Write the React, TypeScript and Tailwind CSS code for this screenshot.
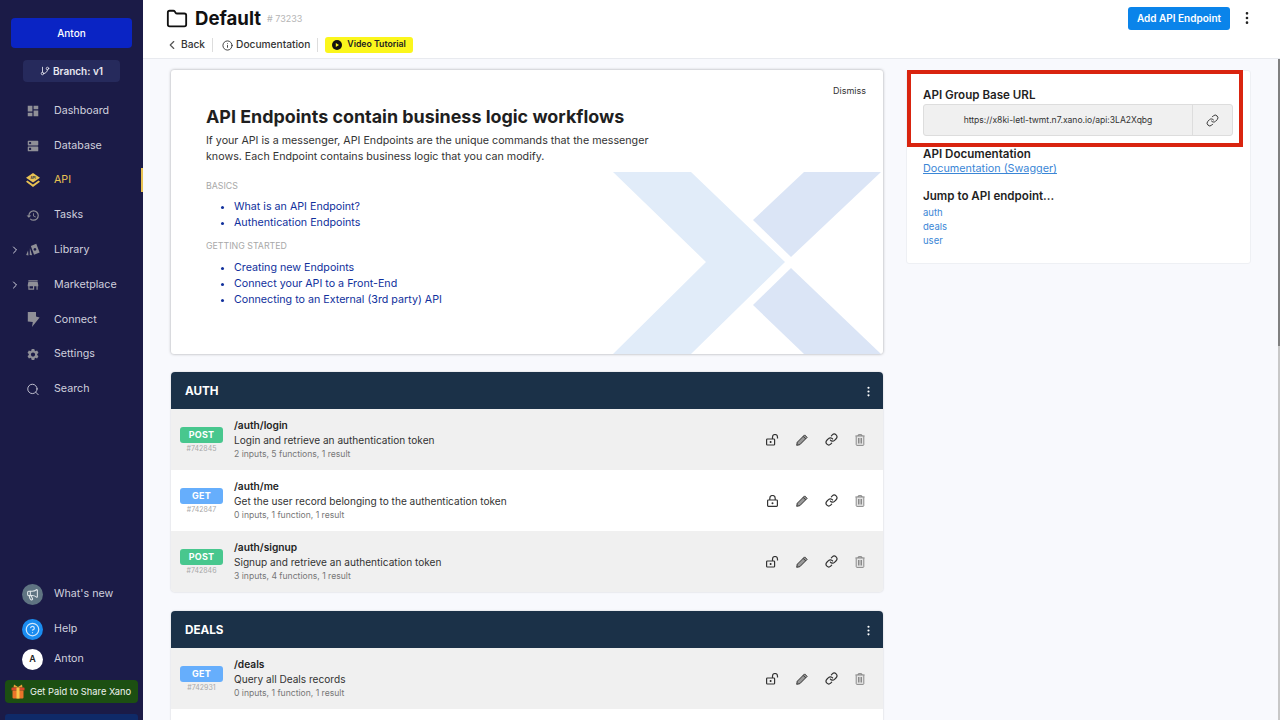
import { ChevronLeft, ChevronRight, Folder, Info, Link, Search, GitBranch, EllipsisVertical, HelpCircle, Megaphone } from "lucide-react";
import { MdDashboard, MdDns, MdHistory, MdStore, MdSettings } from "react-icons/md";

function ApiIcon() {
    return (
        <svg width="14" height="15" viewBox="0 0 14 15" fill="#e8c253">
            <path d="M7 0 14 4.8 7 9.6 0 4.8z" />
            <path d="M1.4 7.6 7 11.6 12.6 7.6 14 8.8 7 14 0 8.8z" />
            <text x="7" y="6" textAnchor="middle" fontSize="3" fontWeight="700" fill="#1b1b47">API</text>
        </svg>
    );
}

function LibraryIcon() {
    return (
        <svg width="15" height="14" viewBox="0 0 15 14" fill="#8f8f97">
            <path fillRule="evenodd" d="M5.2 2.6 11 0.2 14.6 9.8 8.6 12.2zM9.6 4.8a1.5 1.5 0 1 0 .01 0z" />
            <path d="M4.2 5 4 12.4 6.6 12.6z" />
            <path d="M2.2 7.6 0.2 12.4 2.6 12.8z" />
        </svg>
    );
}

function BoltIcon() {
    return (
        <svg width="13" height="15" viewBox="0 0 13 15" fill="#8f8f97">
            <path d="M0.8 0H9V4.6L12.6 5.6 5 15 5.8 10 0.8 9.4z" />
        </svg>
    );
}

function GiftIcon() {
    return (
        <svg width="14" height="15" viewBox="0 0 14 15">
            <path d="M3 0.5 7 3 11 0.5 11.5 3.5H2.5z" fill="#e8a23a" />
            <rect x="0.5" y="3.5" width="13" height="3" rx="0.6" fill="#d9482a" />
            <rect x="1.5" y="6.5" width="11" height="8" rx="1" fill="#e8742a" />
            <rect x="5.5" y="3.5" width="3" height="11" fill="#f4c64a" />
        </svg>
    );
}

function PlayRing() {
    return (
        <svg width="10" height="10" viewBox="0 0 10 10">
            <circle cx="5" cy="5" r="5" fill="#111" />
            <path d="M3.8 3 7 5 3.8 7z" fill="#fbf61c" />
        </svg>
    );
}

function OpenLock() {
    return (
        <svg width="13" height="12" viewBox="0 0 13 12" fill="none" stroke="#333" strokeWidth="1.2">
            <rect x="0.6" y="5" width="8" height="6" rx="0.8" />
            <path d="M6.5 5V3a2.5 2.5 0 0 1 5 0v1.6" />
            <rect x="3.8" y="7" width="1.6" height="2" fill="#333" stroke="none" />
        </svg>
    );
}

function ClosedLock() {
    return (
        <svg width="11" height="12" viewBox="0 0 11 12" fill="none" stroke="#333" strokeWidth="1.2">
            <rect x="0.6" y="5" width="9.8" height="6.4" rx="0.8" />
            <path d="M2.8 5V3.2a2.7 2.7 0 0 1 5.4 0V5" />
            <circle cx="5.5" cy="8.2" r="1" fill="#333" stroke="none" />
        </svg>
    );
}

function PencilIcon() {
    return (
        <svg width="12" height="12" viewBox="0 0 12 12" fill="#999" stroke="#333" strokeWidth="1" strokeLinejoin="round">
            <path d="M8.6 0.9 11.1 3.4 3.8 10.7 0.7 11.3 1.3 8.2z" />
            <path d="M7.2 2.4 9.6 4.8" fill="none" />
        </svg>
    );
}

function TrashIcon() {
    return (
        <svg width="10" height="12" viewBox="0 0 10 12" fill="#e4e4e4" stroke="#8a8a8a" strokeWidth="1">
            <path d="M0.3 2H9.7M3.4 2V0.6H6.6V2" fill="none" />
            <rect x="1.2" y="2" width="7.6" height="9.4" rx="0.8" />
            <path d="M3.5 4V9.5M5 4V9.5M6.5 4V9.5" />
        </svg>
    );
}

const navItems = [
    { label: "Dashboard", icon: <MdDashboard size={18} color="#8f8f97" /> },
    { label: "Database", icon: <MdDns size={16} color="#8f8f97" /> },
    { label: "API", icon: <ApiIcon />, active: true },
    { label: "Tasks", icon: <MdHistory size={17} color="#8f8f97" /> },
    { label: "Library", icon: <LibraryIcon />, arrow: true },
    { label: "Marketplace", icon: <MdStore size={16} color="#8f8f97" />, arrow: true },
    { label: "Connect", icon: <BoltIcon /> },
    { label: "Settings", icon: <MdSettings size={17} color="#8f8f97" /> },
    { label: "Search", icon: <Search size={17} color="#d5d5e0" strokeWidth={1.5} /> },
];

const authRows = [
    { method: "POST", id: "#742845", path: "/auth/login", desc: "Login and retrieve an authentication token", meta: "2 inputs, 5 functions, 1 result" },
    { method: "GET", id: "#742847", path: "/auth/me", desc: "Get the user record belonging to the authentication token", meta: "0 inputs, 1 function, 1 result", locked: true },
    { method: "POST", id: "#742846", path: "/auth/signup", desc: "Signup and retrieve an authentication token", meta: "3 inputs, 4 functions, 1 result" },
];

const dealRows = [
    { method: "GET", id: "#742931", path: "/deals", desc: "Query all Deals records", meta: "0 inputs, 1 function, 1 result" },
];

type RowData = { method: string; id: string; path: string; desc: string; meta: string; locked?: boolean };

function EndpointRow({ row, shaded }: { row: RowData; shaded: boolean }) {
    return (
        <div className={`h-[61px] flex items-center pl-[9px] pr-[18px] ${shaded ? "bg-[#f0f0f0]" : "bg-white"}`}>
            <div className="w-[43px] flex flex-col items-center shrink-0 pt-[1px]">
                <div className={`w-[43px] h-[16px] rounded-[3px] flex items-center justify-center text-white text-[9px] font-bold tracking-wide ${row.method === "POST" ? "bg-[#48c78e]" : "bg-[#66aefc]"}`}>
                    {row.method}
                </div>
                <div className="text-[7px] text-[#a8a8a8] leading-[11px]">{row.id}</div>
            </div>
            <div className="ml-[11px] flex-1">
                <div className="text-[10.2px] font-semibold text-[#1f1f1f] leading-[14px]">{row.path}</div>
                <div className="text-[10.1px] text-[#333] leading-[16px]">{row.desc}</div>
                <div className="text-[8.6px] text-[#777] leading-[13px]">{row.meta}</div>
            </div>
            <div className="flex items-center text-[#333]">
                <div className="w-[13px] flex justify-center">{row.locked ? <ClosedLock /> : <OpenLock />}</div>
                <div className="ml-[17px]"><PencilIcon /></div>
                <Link size={13} strokeWidth={2.2} className="ml-[17px]" />
                <div className="ml-[17px]"><TrashIcon /></div>
            </div>
        </div>
    );
}

function EndpointGroup({ title, rows, blankRow }: { title: string; rows: RowData[]; blankRow?: boolean }) {
    return (
        <div className="rounded-[4px] overflow-hidden shadow-[0_0_2px_rgba(0,0,0,0.2)] mb-[19px]">
            <div className="h-[37px] bg-[#1b3148] flex items-center justify-between pl-[14px] pr-[8px] pt-[2px]">
                <span className="text-white text-[11.7px] font-bold">{title}</span>
                <EllipsisVertical size={13} color="#fff" />
            </div>
            {rows.map((r, i) => (
                <EndpointRow key={r.id} row={r} shaded={i % 2 === 0} />
            ))}
            {blankRow && <div className="h-[61px] bg-white" />}
        </div>
    );
}

export default function App() {
    return (
        <div className="w-[1280px] h-[720px] overflow-hidden flex bg-white font-['Inter',sans-serif]">
            {/* Sidebar */}
            <div className="w-[143px] h-full bg-[#1b1b47] flex flex-col shrink-0 relative">
                <div className="mx-[11px] mt-[18px] h-[30px] rounded-[4px] bg-[#0a24c4] flex items-center justify-center text-[10px] font-medium text-white">Anton</div>
                <div className="mx-[23px] mt-[12px] h-[22px] rounded-[4px] bg-[#262a5c] flex items-center justify-center gap-[3px] text-[10px] font-semibold text-[#e8e8f0]">
                    <GitBranch size={10} /> Branch: v1
                </div>
                <div className="mt-[11.5px]">
                    {navItems.map((item) => (
                        <div key={item.label} className="relative h-[34.8px] flex items-center">
                            {item.arrow && <ChevronRight size={12} color="#d5d5e0" className="absolute left-[9px]" />}
                            <div className="w-[14px] ml-[26px] flex justify-center">{item.icon}</div>
                            <span className={`ml-[14px] text-[10.7px] ${item.active ? "text-[#e8c253]" : "text-[#d0d0de]"}`}>{item.label}</span>
                            {item.active && <div className="absolute right-0 top-[5px] w-[2px] h-[24px] bg-[#e8c253]" />}
                        </div>
                    ))}
                </div>
                <div className="mt-auto">
                    <div className="flex items-center h-[30px] pl-[22px]">
                        <div className="w-[21px] h-[21px] rounded-full bg-[#5f7482] flex items-center justify-center"><Megaphone size={13} color="#dfe5e8" /></div>
                        <span className="ml-[11px] text-[10.7px] text-[#d0d0de]">What's new</span>
                    </div>
                    <div className="flex items-center h-[30px] mt-[5px] pl-[22px]">
                        <div className="w-[21px] h-[21px] rounded-full bg-[#1a8cf0] flex items-center justify-center"><HelpCircle size={15} color="#cfe6fb" /></div>
                        <span className="ml-[11px] text-[10.7px] text-[#d0d0de]">Help</span>
                    </div>
                    <div className="flex items-center h-[30px] pl-[22px]">
                        <div className="w-[21px] h-[21px] rounded-full bg-white flex items-center justify-center text-[9px] font-semibold text-[#222]">A</div>
                        <span className="ml-[11px] text-[10.7px] text-[#d0d0de]">Anton</span>
                    </div>
                    <div className="mx-[5px] mt-[6px] h-[23px] rounded-[4px] bg-[#1c4f12] flex items-center pl-[6px] text-[9.3px] text-[#eef3ee]">
                        <GiftIcon />
                        <span className="ml-[5px] whitespace-nowrap">Get Paid to Share Xano</span>
                    </div>
                    <div className="mx-[5px] mt-[11px] h-[6px] rounded-t-[3px] bg-[#0f2a68]" />
                </div>
            </div>

            {/* Main */}
            <div className="flex-1 flex flex-col min-w-0">
                {/* Header */}
                <div className="h-[59px] border-b border-[#e8eaef] pl-[23px] pr-[25px] flex justify-between shrink-0">
                    <div>
                        <div className="flex items-center mt-[6px] h-[26px]">
                            <Folder size={22} color="#111" strokeWidth={2} />
                            <span className="ml-[7px] text-[18.6px] font-bold text-[#111]">Default</span>
                            <span className="ml-[6px] text-[9px] text-[#b5b5b5]"># 73233</span>
                        </div>
                        <div className="flex items-center mt-[5px] h-[16px] text-[10.2px] font-medium text-[#333]">
                            <ChevronLeft size={14} color="#555" className="-ml-[1px]" />
                            <span className="ml-[2px]">Back</span>
                            <div className="w-px h-[14px] bg-[#ddd] ml-[7px] mr-[9px]" />
                            <Info size={11} color="#333" />
                            <span className="ml-[3px]">Documentation</span>
                            <div className="w-px h-[14px] bg-[#ddd] mx-[7px]" />
                            <div className="h-[16px] w-[88px] pl-[7px] rounded-[3px] bg-[#fbf61c] flex items-center text-[8.7px] font-semibold text-[#222]">
                                <PlayRing />
                                <span className="ml-[5px]">Video Tutorial</span>
                            </div>
                        </div>
                    </div>
                    <div className="flex items-start mt-[7px]">
                        <div className="h-[23px] w-[102px] rounded-[3px] bg-[#0a84ea] flex items-center justify-center text-white text-[10px] font-semibold">Add API Endpoint</div>
                        <EllipsisVertical size={16} color="#222" className="ml-[9px] mt-[3px]" />
                    </div>
                </div>

                {/* Content */}
                <div className="relative flex-1 bg-[#f8f9fd] pl-[28px] pt-[11px] flex gap-[23px] overflow-hidden">
                    <div className="w-[712px] shrink-0">
                        {/* Intro card */}
                        <div className="relative h-[284px] mb-[18px] bg-white rounded-[3px] shadow-[0_0_3px_rgba(0,0,0,0.35)] pl-[35px] pt-[35px] overflow-hidden">
                            <svg className="absolute left-0 top-0" width="712" height="284" viewBox="0 0 712 284">
                                <polygon points="442,102 520,102 614,192 520,284 442,284 535,192" fill="#e1ecf9" />
                                <polygon points="633,102 710,102 620,187 582,150" fill="#dbe5f6" />
                                <polygon points="620,198 710,284 633,284 582,235" fill="#dbe5f6" />
                            </svg>
                            <div className="absolute right-[17px] top-[14px] text-[9px] text-[#333]">Dismiss</div>
                            <div className="relative">
                                <div className="text-[17.9px] font-bold text-[#1f1f1f] leading-[24px]">API Endpoints contain business logic workflows</div>
                                <div className="text-[10.7px] text-[#333] leading-[16px] mt-[4px] w-[470px]">If your API is a messenger, API Endpoints are the unique commands that the messenger knows. Each Endpoint contains business logic that you can modify.</div>
                                <div className="text-[8.8px] text-[#a8a8a8] mt-[15px] leading-[12px]">BASICS</div>
                                <ul className="list-disc pl-[28px] mt-[7px] text-[10.7px] text-[#10309c] leading-[16px]">
                                    <li>What is an API Endpoint?</li>
                                    <li>Authentication Endpoints</li>
                                </ul>
                                <div className="text-[8.8px] text-[#a8a8a8] mt-[9px] leading-[12px]">GETTING STARTED</div>
                                <ul className="list-disc pl-[28px] mt-[8px] text-[10.7px] text-[#10309c] leading-[16px]">
                                    <li>Creating new Endpoints</li>
                                    <li>Connect your API to a Front-End</li>
                                    <li>Connecting to an External (3rd party) API</li>
                                </ul>
                            </div>
                        </div>
                        <EndpointGroup title="AUTH" rows={authRows} />
                        <EndpointGroup title="DEALS" rows={dealRows} blankRow />
                    </div>

                    {/* Right column */}
                    <div className="relative w-[345px] h-[194px] bg-white border border-[#eef0f4] rounded-[3px] pl-[16px] pr-[17px] pt-[17px] shrink-0">
                        <div className="text-[11.6px] font-semibold text-[#1f1f1f] leading-[14px]">API Group Base URL</div>
                        <div className="mt-[2px] h-[32px] flex rounded-[3px] border border-[#ddd] bg-[#f0f0f0]">
                            <div className="flex-1 flex items-center justify-center text-[8.55px] text-[#333]">https://x8ki-letl-twmt.n7.xano.io/api:3LA2Xqbg</div>
                            <div className="w-[40px] border-l border-[#ddd] flex items-center justify-center"><Link size={13} color="#333" strokeWidth={1.8} /></div>
                        </div>
                        <div className="text-[11.6px] font-semibold text-[#1f1f1f] leading-[14px] mt-[11px]">API Documentation</div>
                        <div className="text-[10.8px] text-[#3a86d6] underline leading-[16px]">Documentation (Swagger)</div>
                        <div className="text-[11.6px] font-semibold text-[#1f1f1f] leading-[14px] mt-[12px]">Jump to API endpoint...</div>
                        <div className="mt-[3px] text-[9.5px] text-[#3a86d6] leading-[14px]">
                            <div>auth</div>
                            <div>deals</div>
                            <div>user</div>
                        </div>
                        <div className="absolute left-0 -top-[1px] w-[336px] h-[77px] border-[4px] border-[#d9240f]" />
                    </div>

                    {/* Scrollbar */}
                    <div className="absolute right-0 top-0 bottom-0 w-[2px] bg-[#c8c8c8]">
                        <div className="w-[2px] h-[287px] bg-[#808080]" />
                    </div>
                </div>
            </div>
        </div>
    );
}
